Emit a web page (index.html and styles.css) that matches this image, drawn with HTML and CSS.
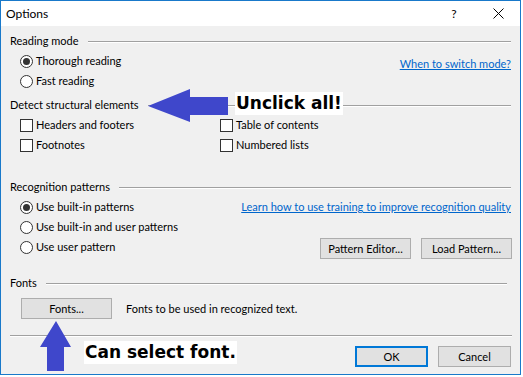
FILE: index.html
```html
<!DOCTYPE html>
<html>
<head>
<meta charset="utf-8">
<link rel="stylesheet" href="styles.css">
</head>
<body>
<div class="window">
  <div class="titlebar">
    <span class="title">Options</span>
    <span class="help">?</span>
    <span class="close"><svg width="11" height="11" viewBox="0 0 11 11"><path d="M0.5 0.5 L10.5 10.5 M10.5 0.5 L0.5 10.5" stroke="#000" stroke-width="1"/></svg></span>
  </div>
  <div class="content">
    <div class="group g-reading">
      <div class="ghead"><span>Reading mode</span><i class="rule"></i></div>
      <div class="row-split">
        <div class="opts">
          <label class="opt"><span class="radio on"></span>Thorough reading</label>
          <label class="opt"><span class="radio"></span>Fast reading</label>
        </div>
        <a class="link link-mode">When to switch mode?</a>
      </div>
    </div>
    <div class="group g-detect">
      <div class="ghead"><span>Detect structural elements</span><i class="rule"></i></div>
      <div class="checks">
        <label class="opt"><span class="check"></span>Headers and footers</label>
        <label class="opt"><span class="check"></span>Table of contents</label>
        <label class="opt"><span class="check"></span>Footnotes</label>
        <label class="opt"><span class="check"></span>Numbered lists</label>
      </div>
    </div>
    <div class="group g-recog">
      <div class="ghead"><span>Recognition patterns</span><i class="rule"></i></div>
      <div class="row-split">
        <div class="opts">
          <label class="opt"><span class="radio on"></span>Use built-in patterns</label>
          <label class="opt"><span class="radio"></span>Use built-in and user patterns</label>
          <label class="opt"><span class="radio"></span>Use user pattern</label>
        </div>
        <div class="rcol">
          <a class="link">Learn how to use training to improve recognition quality</a>
          <div class="btns">
            <button class="btn">Pattern Editor...</button>
            <button class="btn">Load Pattern...</button>
          </div>
        </div>
      </div>
    </div>
    <div class="group g-fonts">
      <div class="ghead"><span>Fonts</span><i class="rule"></i></div>
      <div class="fontrow">
        <button class="btn btn-fonts">Fonts...</button>
        <span>Fonts to be used in recognized text.</span>
      </div>
    </div>
    <div class="sep"></div>
    <div class="footer">
      <button class="btn btn-ok">OK</button>
      <button class="btn btn-cancel">Cancel</button>
    </div>
  </div>

  <svg class="arrow-left" width="82" height="35" viewBox="0 0 82 35"><polygon points="0,17 42,0 42,8 80,8 80,26 42,26 42,33" fill="#3f47cb"/></svg>
  <div class="note note-unclick">Unclick all!</div>
  <svg class="arrow-up" width="32" height="52" viewBox="0 0 32 52"><polygon points="16,0 31,26 24,26 24,50 7,50 7,26 0,26" fill="#3f47cb"/></svg>
  <div class="note note-font">Can select font.</div>
</div>
</body>
</html>
```

FILE: styles.css
```css
html, body {
  margin: 0;
  padding: 0;
  background: #ffffff;
}
body {
  width: 523px;
  height: 377px;
  overflow: hidden;
  font-family: "Lato", "Noto Sans", sans-serif;
  font-size: 11px;
  color: #000;
}
.window {
  position: relative;
  width: 521px;
  height: 375px;
  border: 1px solid #1979ca;
  box-sizing: border-box;
  background: #f0f0f0;
  display: flex;
  flex-direction: column;
  overflow: hidden;
}
.titlebar {
  flex: none;
  height: 25px;
  background: #fff;
  display: flex;
  align-items: center;
  padding-left: 5px;
  font-size: 12px;
}
.title { flex: 1; }
.help { width: 8px; margin-right: 35px; text-align: center; }
.close { width: 11px; margin-right: 16px; display: flex; }
.content {
  flex: 1;
  min-height: 0;
  padding: 0 8px 0 9px;
  display: flex;
  flex-direction: column;
}
.group { flex: none; }
.ghead {
  display: flex;
  align-items: center;
  height: 16px;
  line-height: 16px;
}
.ghead .rule {
  flex: 1;
  margin-left: 9px;
  margin-right: 1px;
  border-top: 1px solid #a0a0a0;
  border-bottom: 1px solid #fff;
  margin-top: 2px;
}
.g-reading { margin-top: 7px; }
.row-split {
  display: flex;
  justify-content: space-between;
  align-items: flex-start;
  margin-top: 2px;
}
.opts { display: flex; flex-direction: column; padding-left: 10px; }
.opt {
  display: flex;
  align-items: center;
  height: 20px;
  line-height: 20px;
  white-space: nowrap;
}
.radio, .check {
  width: 13px;
  height: 13px;
  box-sizing: border-box;
  border: 1px solid #333;
  background: #fff;
  margin-right: 3px;
  flex: none;
  display: flex;
  align-items: center;
  justify-content: center;
}
.radio { border-radius: 50%; }
.radio.on::after {
  content: "";
  width: 7px;
  height: 7px;
  border-radius: 50%;
  background: #333;
}
.link {
  color: #0066cc;
  text-decoration: underline;
  cursor: pointer;
  line-height: 20px;
  white-space: nowrap;
}
.link-mode { margin-top: 3px; margin-right: 1px; }
.g-detect { margin-top: 6px; }
.checks {
  display: grid;
  grid-template-columns: 200px auto;
  padding-left: 10px;
  margin-top: 2px;
}
.g-recog { margin-top: 24px; }
.rcol {
  display: flex;
  flex-direction: column;
  align-items: flex-end;
  margin-right: 1px;
}
.btns { display: flex; gap: 10px; margin-top: 21px; margin-right: -1px; }
.btn {
  font-family: inherit;
  font-size: 11px;
  background: #e1e1e1;
  border: 1px solid #adadad;
  height: 21px;
  padding: 0;
  color: #000;
  box-sizing: border-box;
}
.btns .btn { width: 91px; }
.g-fonts { margin-top: 16px; }
.g-fonts .rule { margin-right: 5px; }
.fontrow {
  display: flex;
  align-items: center;
  margin-top: 7px;
  padding-left: 11px;
}
.btn-fonts { width: 91px; margin-right: 14px; }
.sep {
  flex: none;
  margin-top: 16px;
  border-top: 1px solid #a0a0a0;
  border-bottom: 1px solid #fff;
}
.footer {
  display: flex;
  justify-content: flex-end;
  gap: 10px;
  margin-top: 9px;
  margin-right: 1px;
}
.footer .btn { width: 73px; }
.btn-ok { border: 2px solid #0078d7; }

.arrow-left { position: absolute; left: 147px; top: 88px; }
.arrow-up { position: absolute; left: 39px; top: 320px; }
.note {
  position: absolute;
  background: #fff;
  font-family: "DejaVu Sans", sans-serif;
  font-weight: bold;
  font-size: 17px;
  line-height: 23px;
  color: #000;
  padding: 0 1px;
  white-space: nowrap;
}
.note-unclick { left: 234px; top: 91px; }
.note-font { left: 83px; top: 340px; }
```
